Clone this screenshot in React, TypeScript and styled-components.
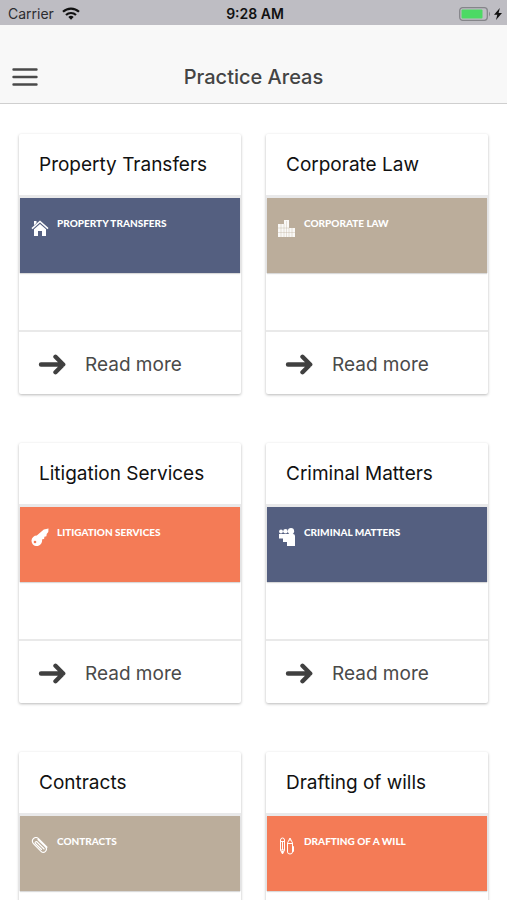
import React from "react";
import styled, { createGlobalStyle } from "styled-components";

const GlobalStyle = createGlobalStyle`
  *, *::before, *::after { box-sizing: border-box; }
  body {
    margin: 0;
    background: #ffffff;
    color: #111111;
    font-family: Inter, "Liberation Sans", sans-serif;
  }
  html { scrollbar-width: none; }
`;

const TopArea = styled.div`
  position: sticky;
  top: 0;
  z-index: 1;
`;

const StatusBar = styled.div`
  display: grid;
  grid-template-columns: 1fr auto 1fr;
  align-items: center;
  height: 25px;
  padding: 2px 5px 0 8px;
  background: #bebdc3;
  font-size: 14px;
  line-height: 20px;
`;

const Carrier = styled.span`
  display: flex;
  align-items: center;
  gap: 8px;
  color: #2c2c30;
`;

const Clock = styled.time`
  color: #111111;
  font-weight: 600;
`;

const Power = styled.span`
  display: flex;
  align-items: center;
  justify-content: flex-end;
  gap: 3px;
`;

const NavBar = styled.header`
  display: grid;
  grid-template-columns: 50px 1fr 50px;
  align-items: center;
  height: 79px;
  padding-top: 25px;
  background: #f8f8f8;
  border-bottom: 1px solid #cfcfcf;
`;

const MenuButton = styled.button`
  display: flex;
  align-items: center;
  justify-content: center;
  height: 44px;
  padding: 0;
  border: 0;
  background: none;
  color: #4a4a4a;
  cursor: pointer;
`;

const PageTitle = styled.h1`
  margin: 0;
  color: #444444;
  font-size: 20px;
  line-height: 28px;
  font-weight: 500;
  text-align: center;
`;

const CardGrid = styled.main`
  display: grid;
  grid-template-columns: repeat(2, minmax(0, 1fr));
  gap: 49px 25px;
  padding: 30px 19px 49px;
`;

const Card = styled.article`
  display: flex;
  flex-direction: column;
  border-radius: 2px;
  background: #ffffff;
  box-shadow: 0 1px 3px rgba(0, 0, 0, 0.28);
`;

const CardTitle = styled.h2`
  margin: 0;
  padding: 17px 20px 16px;
  color: #111111;
  font-size: 19px;
  line-height: 28px;
  font-weight: 400;
  white-space: nowrap;
`;

const Media = styled.div`
  padding: 3px 1px 0;
  background: #e9e9ea;
`;

const Banner = styled.div<{ $tone: string }>`
  display: flex;
  align-items: flex-start;
  gap: 8px;
  height: 75px;
  padding: 18px 11px;
  background: ${(p) => p.$tone};
  color: #ffffff;
  box-shadow: 0 1px 1px rgba(0, 0, 0, 0.15);
  font-family: Lato, "Liberation Sans", sans-serif;
  font-size: 10px;
  line-height: 14px;
  font-weight: 900;
  text-transform: uppercase;
  white-space: nowrap;
`;

const BannerIcon = styled.svg`
  flex: none;
  width: 18px;
  height: 18px;
  margin-top: 3px;
`;

const ReadMore = styled.a`
  display: flex;
  align-items: center;
  gap: 19px;
  height: 64px;
  margin-top: 57px;
  padding: 3px 19px 0;
  border-top: 2px solid #e9e9e9;
  color: #4a4a4a;
  font-size: 19px;
  line-height: 28px;
  text-decoration: none;
`;

const SLATE = "#545f80";
const SAND = "#bbad9b";
const CORAL = "#f47b56";

function HouseIcon() {
  return (
    <BannerIcon viewBox="0 0 18 18" aria-hidden="true">
      <path d="M1 9.600 9 2.400l8 7.200" fill="none" stroke="currentColor" strokeWidth="1.500" />
      <path d="M3 2h2.500v2L3 6.200zM3 10.200l6-5.200 6 5.200V17h-4v-5H7v5H3z" fill="currentColor" />
    </BannerIcon>
  );
}

function BuildingsIcon({ lines }: { lines: string }) {
  return (
    <BannerIcon viewBox="0 0 18 18" aria-hidden="true">
      <path d="M0 5h6V1h5v8h6v9H0z" fill="currentColor" opacity=".92" />
      <path d="M0 9h11M0 13.500h17M3 5v13M6 5v13M11 9v9M8.500 2v16M14 9v9" fill="none" stroke={lines} strokeWidth=".35" />
    </BannerIcon>
  );
}

function KeyIcon({ hole }: { hole: string }) {
  return (
    <BannerIcon viewBox="0 0 18 18" aria-hidden="true">
      <path d="M17.500.5 12.800 1.500 5.800 7.500A5.300 5.300 0 1 0 11 13.800l.2-2.500 1.900-.4.300-2.200 2-.5.300-2.300 1.600-1.900z" fill="currentColor" />
      <circle cx="4" cy="14" r="1.300" fill={hole} />
    </BannerIcon>
  );
}

function PeopleIcon() {
  return (
    <BannerIcon viewBox="0 0 18 18" aria-hidden="true">
      <g fill="currentColor">
        <circle cx="3" cy="3.500" r="1.900" />
        <circle cx="7.500" cy="3.300" r="2.300" />
        <circle cx="13" cy="3.200" r="3.100" />
        <path d="M1 6h14q2 0 2 2v10H9v-4H5v-3.500H1z" />
      </g>
    </BannerIcon>
  );
}

function PaperclipIcon() {
  return (
    <BannerIcon viewBox="0 0 18 18" aria-hidden="true">
      <g transform="rotate(45 9 9)" fill="none" stroke="currentColor" strokeWidth="1.200" strokeLinecap="round">
        <path d="M3 5.800h10.500a3 3 0 0 1 0 6.200H2.700A3.600 3.600 0 0 1 2.700 4.800h12" />
        <path d="M14 8.200H3.500a1.400 1.400 0 0 0 0 2.200h9" />
      </g>
    </BannerIcon>
  );
}

function PencilsIcon() {
  return (
    <BannerIcon viewBox="0 0 18 18" aria-hidden="true">
      <g fill="none" stroke="currentColor" strokeWidth="1" strokeLinejoin="round">
        <path d="M2.500 3q0-2 2-2t2 2v10l-2 4-2-4zM2.500 4.500h4M2.500 13h4M4.500 4.500V13" />
        <path d="m12 1 2.500 5v9q0 2-2.500 2t-2.500-2V6zM9.500 6.500h5M14.500 9.500h1v5h-1" />
      </g>
      <path d="m3.300 14 1.200 3 1.200-3zM11 3.500 12 1l1 2.500z" fill="currentColor" />
    </BannerIcon>
  );
}

function ArrowIcon() {
  return (
    <svg width="28" height="22" viewBox="0 0 28 22" aria-hidden="true">
      <path d="M3 10.500h22M17.500 2.800 25.200 10.500 17.500 18.200" fill="none" stroke="#404040" strokeWidth="4.400" strokeLinecap="round" strokeLinejoin="round" />
    </svg>
  );
}

const areas = [
  { title: "Property Transfers", label: "Property Transfers", tone: SLATE, icon: <HouseIcon /> },
  { title: "Corporate Law", label: "Corporate Law", tone: SAND, icon: <BuildingsIcon lines={SAND} /> },
  { title: "Litigation Services", label: "Litigation Services", tone: CORAL, icon: <KeyIcon hole={CORAL} /> },
  { title: "Criminal Matters", label: "Criminal Matters", tone: SLATE, icon: <PeopleIcon /> },
  { title: "Contracts", label: "Contracts", tone: SAND, icon: <PaperclipIcon /> },
  { title: "Drafting of wills", label: "Drafting of a will", tone: CORAL, icon: <PencilsIcon /> },
];

export default function App() {
  return (
    <>
      <GlobalStyle />
      <TopArea>
        <StatusBar>
          <Carrier>
            Carrier
            <svg width="18" height="13" viewBox="0 0 18 13" aria-label="Wi-Fi">
              <g fill="none" stroke="#111111" strokeWidth="2.200">
                <path d="M1 4.800a11.500 11.500 0 0 1 16 0" />
                <path d="M4 8a7.200 7.200 0 0 1 10 0" />
              </g>
              <path d="M6.300 10a4 4 0 0 1 5.400 0L9 12.700z" fill="#111111" />
            </svg>
          </Carrier>
          <Clock>9:28 AM</Clock>
          <Power>
            <svg width="32" height="14" viewBox="0 0 32 14" aria-label="Battery">
              <rect x=".7" y=".7" width="27.600" height="12.600" rx="3" fill="none" stroke="#85858a" strokeWidth="1.300" />
              <rect x="2.500" y="2.500" width="21" height="9" rx="1" fill="#4cd964" />
              <path d="M30 4.500q2 2.500 0 5z" fill="#85858a" />
            </svg>
            <svg width="8" height="12" viewBox="0 0 8 12" aria-label="Charging">
              <path d="M5.800 0 0 6.700h3.300L2 12l6-7H4.600z" fill="#111111" />
            </svg>
          </Power>
        </StatusBar>
        <NavBar>
          <MenuButton type="button" aria-label="Menu">
            <svg width="26" height="20" viewBox="0 0 26 20" aria-hidden="true">
              <path d="M1.500 2.500h23M1.500 10h23M1.500 17.500h23" stroke="currentColor" strokeWidth="2.400" strokeLinecap="round" />
            </svg>
          </MenuButton>
          <PageTitle>Practice Areas</PageTitle>
        </NavBar>
      </TopArea>
      <CardGrid>
        {areas.map((area) => (
          <Card key={area.title}>
            <CardTitle>{area.title}</CardTitle>
            <Media>
              <Banner $tone={area.tone}>
                {area.icon}
                <span>{area.label}</span>
              </Banner>
            </Media>
            <ReadMore href="#" aria-label={`Read more about ${area.title}`}>
              <ArrowIcon />
              Read more
            </ReadMore>
          </Card>
        ))}
      </CardGrid>
    </>
  );
}
